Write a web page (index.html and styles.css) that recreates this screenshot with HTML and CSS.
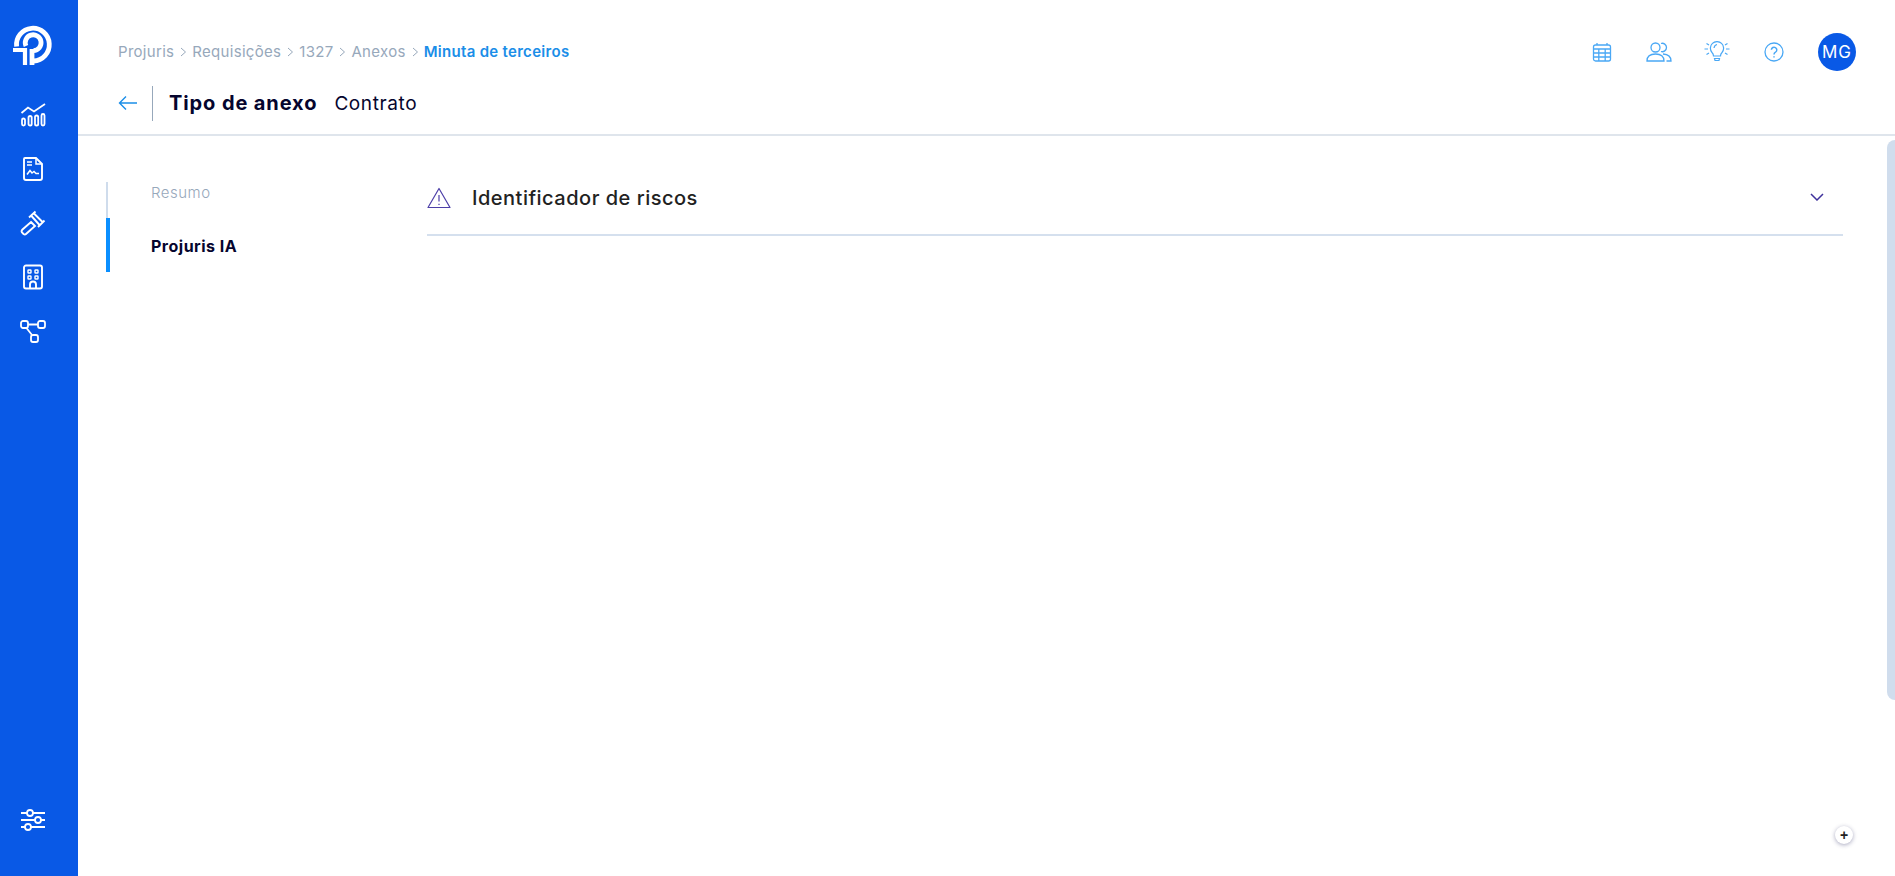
FILE: index.html
```html
<!DOCTYPE html>
<html lang="pt-BR">
<head>
    <meta charset="UTF-8">
    <title>Minuta de terceiros</title>
    <link rel="stylesheet" href="styles.css">
</head>
<body>
    <div class="app">
        <aside class="sidebar">
            <svg class="logo" viewBox="0 0 50 50" fill="none" stroke="#fff" stroke-width="4.8">
                <path d="M8.6 24.5 A16.4 16.4 0 1 1 25.5 39"/>
                <path d="M18 24 A7.9 7.9 0 1 1 25.5 28.6"/>
                <path d="M24 27 V43"/>
                <path d="M5 28 H17 V43" stroke-width="4.2"/>
            </svg>
            <nav class="side-icons">
                <svg class="side-icon" viewBox="0 0 26 26" fill="none" stroke="#fff" stroke-width="1.8">
                    <path d="M1.5 11 L8 5.5 L14 9.5 L25 2"/>
                    <rect x="2" y="16.5" width="3" height="7" rx="1.5"/>
                    <rect x="8.5" y="14" width="3.2" height="9.5" rx="1.6"/>
                    <rect x="15" y="13.5" width="3.2" height="10" rx="1.6"/>
                    <rect x="21.5" y="12" width="3" height="11.5" rx="1.5"/>
                </svg>
                <svg class="side-icon" viewBox="0 0 26 26" fill="none" stroke="#fff" stroke-width="1.9">
                    <path d="M5 2 H16 L22 8 V22 Q22 24 20 24 H6 Q4 24 4 22 V3 Q4 2 5 2 Z"/>
                    <path d="M16 2 V8 H22" stroke-width="1.5"/>
                    <path d="M7 6 H12 M7 9 H12" stroke-width="1.3"/>
                    <path d="M7 18.5 L10 14.5 L12 17 L14 15.5 L16 17.5 H19" stroke-width="1.5"/>
                </svg>
                <svg class="side-icon" viewBox="0 0 26 26" fill="none" stroke="#fff" stroke-width="1.9">
                    <path d="M9 7.5 L15.5 1.5 M18 17 L24.5 10.5 M11.5 6 L19.5 15 M14 3.5 L22.5 12"/>
                    <path d="M11 12 L15 16 L6 24 Q5 25 3.5 24 L2 22.5 Q1 21 2.5 19.5 Z"/>
                </svg>
                <svg class="side-icon" viewBox="0 0 26 26" fill="none" stroke="#fff" stroke-width="1.9">
                    <rect x="4" y="1.5" width="18" height="23" rx="2"/>
                    <rect x="8" y="6" width="3" height="3" rx=".6" stroke-width="1.4"/>
                    <rect x="15" y="6" width="3" height="3" rx=".6" stroke-width="1.4"/>
                    <rect x="8" y="12" width="3" height="3" rx=".6" stroke-width="1.4"/>
                    <rect x="15" y="12" width="3" height="3" rx=".6" stroke-width="1.4"/>
                    <path d="M10 24 V20.5 A3 3 0 0 1 16 20.5 V24"/>
                </svg>
                <svg class="side-icon" viewBox="0 0 26 26" fill="none" stroke="#fff" stroke-width="1.8">
                    <rect x="1" y="3" width="7" height="7" rx="2"/>
                    <rect x="18" y="3" width="7" height="7" rx="2"/>
                    <rect x="11" y="17" width="7" height="7" rx="2"/>
                    <path d="M8 6.5 H18 M6.5 10 L12 17"/>
                </svg>
            </nav>
            <svg class="side-icon" viewBox="0 0 26 26" fill="none" stroke="#fff" stroke-width="1.8">
                <path d="M1 6 H7 M13 6 H25 M1 13 H15 M21 13 H25 M1 20 H5 M11 20 H25"/>
                <circle cx="10" cy="6" r="3"/>
                <circle cx="18" cy="13" r="3"/>
                <circle cx="8" cy="20" r="3"/>
            </svg>
        </aside>

        <main class="main">
            <header class="header">
                <div class="header-top">
                    <div class="breadcrumb">
                        <span>Projuris</span>
                        <svg class="crumb-sep" viewBox="0 0 8 12" fill="none" stroke="#97a8bb" stroke-width="1"><path d="M2 2 L6.5 6 L2 10"/></svg>
                        <span>Requisições</span>
                        <svg class="crumb-sep" viewBox="0 0 8 12" fill="none" stroke="#97a8bb" stroke-width="1"><path d="M2 2 L6.5 6 L2 10"/></svg>
                        <span>1327</span>
                        <svg class="crumb-sep" viewBox="0 0 8 12" fill="none" stroke="#97a8bb" stroke-width="1"><path d="M2 2 L6.5 6 L2 10"/></svg>
                        <span>Anexos</span>
                        <svg class="crumb-sep" viewBox="0 0 8 12" fill="none" stroke="#97a8bb" stroke-width="1"><path d="M2 2 L6.5 6 L2 10"/></svg>
                        <span class="crumb-current">Minuta de terceiros</span>
                    </div>
                    <div class="header-tools">
                        <svg class="tool tool-calendar" viewBox="0 0 20 20" fill="none" stroke="#4aa8f5" stroke-width="1.3">
                            <rect x="1.5" y="3" width="17" height="16" rx="2"/>
                            <path d="M5 1 V3 M15 1 V3 M1.5 7 H18.5 M1.5 11 H18.5 M1.5 15 H18.5 M6.8 7 V19 M13.2 7 V19"/>
                        </svg>
                        <svg class="tool tool-users" viewBox="0 0 26 20" fill="none" stroke="#4aa8f5" stroke-width="1.3">
                            <circle cx="9.5" cy="5.5" r="4.5"/>
                            <path d="M15 1.5 A4.2 4.2 0 1 1 15 9.5"/>
                            <path d="M1 19 Q1 12 9.5 12 Q18 12 18 19 Z"/>
                            <path d="M17 12 Q25 12.5 25 19 H20.5"/>
                        </svg>
                        <svg class="tool tool-bulb" viewBox="0 0 26 22" fill="none" stroke="#4aa8f5" stroke-width="1.2">
                            <path d="M9.5 15 Q9.5 13 8 11.5 A6.6 6.6 0 1 1 18 11.5 Q16.5 13 16.5 15 Z"/>
                            <path d="M10 7 Q10.5 4 13 3.5"/>
                            <path d="M10.5 17.5 H15.5 L15 19.5 H11 Z"/>
                            <path d="M0.5 8 H4 M22 8 H25.5 M2.5 2.5 L5 4 M23.5 2.5 L21 4 M2.5 13.5 L5 12 M23.5 13.5 L21 12"/>
                        </svg>
                        <svg class="tool tool-help" viewBox="0 0 20 20" fill="none" stroke="#4aa8f5" stroke-width="1.3">
                            <circle cx="10" cy="10" r="9"/>
                            <path d="M7.4 7.8 A2.7 2.7 0 1 1 11.5 10.2 Q10 11 10 12.5" stroke-width="1.5"/>
                            <path d="M10 14.2 V15.6" stroke-width="1.5"/>
                        </svg>
                        <div class="avatar">MG</div>
                    </div>
                </div>
                <div class="header-title">
                    <svg class="back" viewBox="0 0 20 16" fill="none" stroke="#1b8ee8" stroke-width="1.4"><path d="M19 8 H2 M8 1.5 L1.5 8 L8 14.5"/></svg>
                    <div class="title-sep"></div>
                    <h1>Tipo de anexo</h1>
                    <span class="title-value">Contrato</span>
                </div>
            </header>

            <div class="content">
                <nav class="tabs">
                    <a class="tab">Resumo</a>
                    <a class="tab tab-active">Projuris IA</a>
                </nav>
                <section class="panel">
                    <div class="panel-head">
                        <svg class="warn" viewBox="0 0 24 22" fill="none" stroke="#4d3fa8" stroke-width="1.2">
                            <path d="M12 1.5 L23 20.5 H1 Z" stroke-linejoin="round"/>
                            <path d="M12 8 V14.5 M12 16.8 V18"/>
                        </svg>
                        <h2>Identificador de riscos</h2>
                        <svg class="chevron" viewBox="0 0 14 8" fill="none" stroke="#3f329c" stroke-width="1.5"><path d="M1 1 L7 7 L13 1"/></svg>
                    </div>
                </section>
            </div>
        </main>
    </div>
    <div class="scroll-thumb"></div>
    <button class="fab">+</button>
</body>
</html>
```

FILE: styles.css
```css
body {
    font-family: 'Inter', 'Noto Sans', sans-serif;
    margin: 0;
    padding: 0;
    background-color: #fff;
    height: 100vh;
    overflow: hidden;
}

.app {
    display: flex;
    height: 100vh;
}

.sidebar {
    width: 78px;
    flex-shrink: 0;
    background-color: #0959e6;
    display: flex;
    flex-direction: column;
    align-items: center;
    padding: 22px 12px 43px 0;
    box-sizing: border-box;
}

.logo {
    width: 50px;
    height: 50px;
    flex-shrink: 0;
}

.side-icons {
    display: flex;
    flex-direction: column;
    gap: 28px;
    margin-top: 30px;
    flex: 1;
}

.side-icon {
    width: 26px;
    height: 26px;
    display: block;
}

.main {
    flex: 1;
    min-width: 0;
    display: flex;
    flex-direction: column;
}

.header {
    height: 136px;
    box-sizing: border-box;
    border-bottom: 2px solid #dfe5ec;
    padding: 33px 39px 0 40px;
}

.header-top {
    display: flex;
    justify-content: space-between;
    align-items: center;
    height: 38px;
}

.breadcrumb {
    display: flex;
    align-items: center;
    gap: 5px;
    font-size: 15px;
    letter-spacing: 0.3px;
    color: #97a8bb;
    margin-top: -1px;
}

.crumb-sep {
    width: 8px;
    height: 12px;
}

.crumb-current {
    color: #1b8ee8;
    font-weight: 600;
}

.header-tools {
    display: flex;
    align-items: center;
}

.tool {
    display: block;
    height: 20px;
}

.tool-calendar { width: 20px; }
.tool-users { width: 26px; margin-left: 34px; }
.tool-bulb { width: 26px; height: 22px; margin-left: 32px; }
.tool-help { width: 20px; margin-left: 34px; }

.avatar {
    width: 38px;
    height: 38px;
    margin-left: 34px;
    border-radius: 50%;
    background-color: #0959e6;
    color: #fff;
    font-size: 17px;
    letter-spacing: 1px;
    line-height: 38px;
    text-align: center;
}

.header-title {
    display: flex;
    align-items: center;
    height: 36px;
    margin-top: 14px;
}

.back {
    width: 20px;
    height: 16px;
}

.title-sep {
    width: 1px;
    height: 35px;
    background-color: #97a8bb;
    margin-left: 14px;
}

h1 {
    font-size: 20px;
    font-weight: 700;
    letter-spacing: 0.9px;
    color: #05052e;
    margin: 0 0 0 16px;
}

.title-value {
    font-size: 19px;
    letter-spacing: 0.6px;
    color: #05052e;
    margin-left: 17px;
}

.content {
    flex: 1;
    display: flex;
    padding: 46px 52px 0 28px;
}

.tabs {
    width: 321px;
    flex-shrink: 0;
    display: flex;
    flex-direction: column;
}

.tab {
    display: flex;
    align-items: flex-start;
    height: 36px;
    padding-left: 43px;
    border-left: 2px solid #cfdcec;
    font-size: 15px;
    font-weight: 300;
    letter-spacing: 0.5px;
    line-height: 22px;
    color: #97a8bb;
}

.tab-active {
    align-items: center;
    height: 54px;
    padding: 1px 0 0 41px;
    box-sizing: border-box;
    border-left: 4px solid #0a8fff;
    font-size: 16px;
    font-weight: 700;
    color: #05052e;
}

.panel {
    flex: 1;
    min-width: 0;
}

.panel-head {
    display: flex;
    align-items: center;
    margin-top: -46px;
    padding-top: 26px;
    box-sizing: border-box;
    height: 100px;
    border-bottom: 2px solid #d5e0ee;
}

.warn {
    width: 24px;
    height: 22px;
}

h2 {
    font-size: 20px;
    font-weight: 500;
    letter-spacing: 0.5px;
    color: #222;
    margin: 0 0 0 21px;
    flex: 1;
}

.chevron {
    width: 14px;
    height: 8px;
    margin: -2px 19px 0 0;
}

.scroll-thumb {
    position: absolute;
    top: 140px;
    right: 0;
    width: 8px;
    height: 560px;
    background-color: #d0dded;
    border-radius: 8px 0 0 8px;
}

.fab {
    position: absolute;
    left: 1835px;
    top: 826px;
    width: 18px;
    height: 18px;
    padding: 0;
    border: none;
    border-radius: 50%;
    background-color: #fff;
    box-shadow: 0 1px 4px rgba(60, 60, 110, 0.45);
    color: #222;
    font-size: 14px;
    font-weight: 700;
    line-height: 17px;
    text-align: center;
}
```
